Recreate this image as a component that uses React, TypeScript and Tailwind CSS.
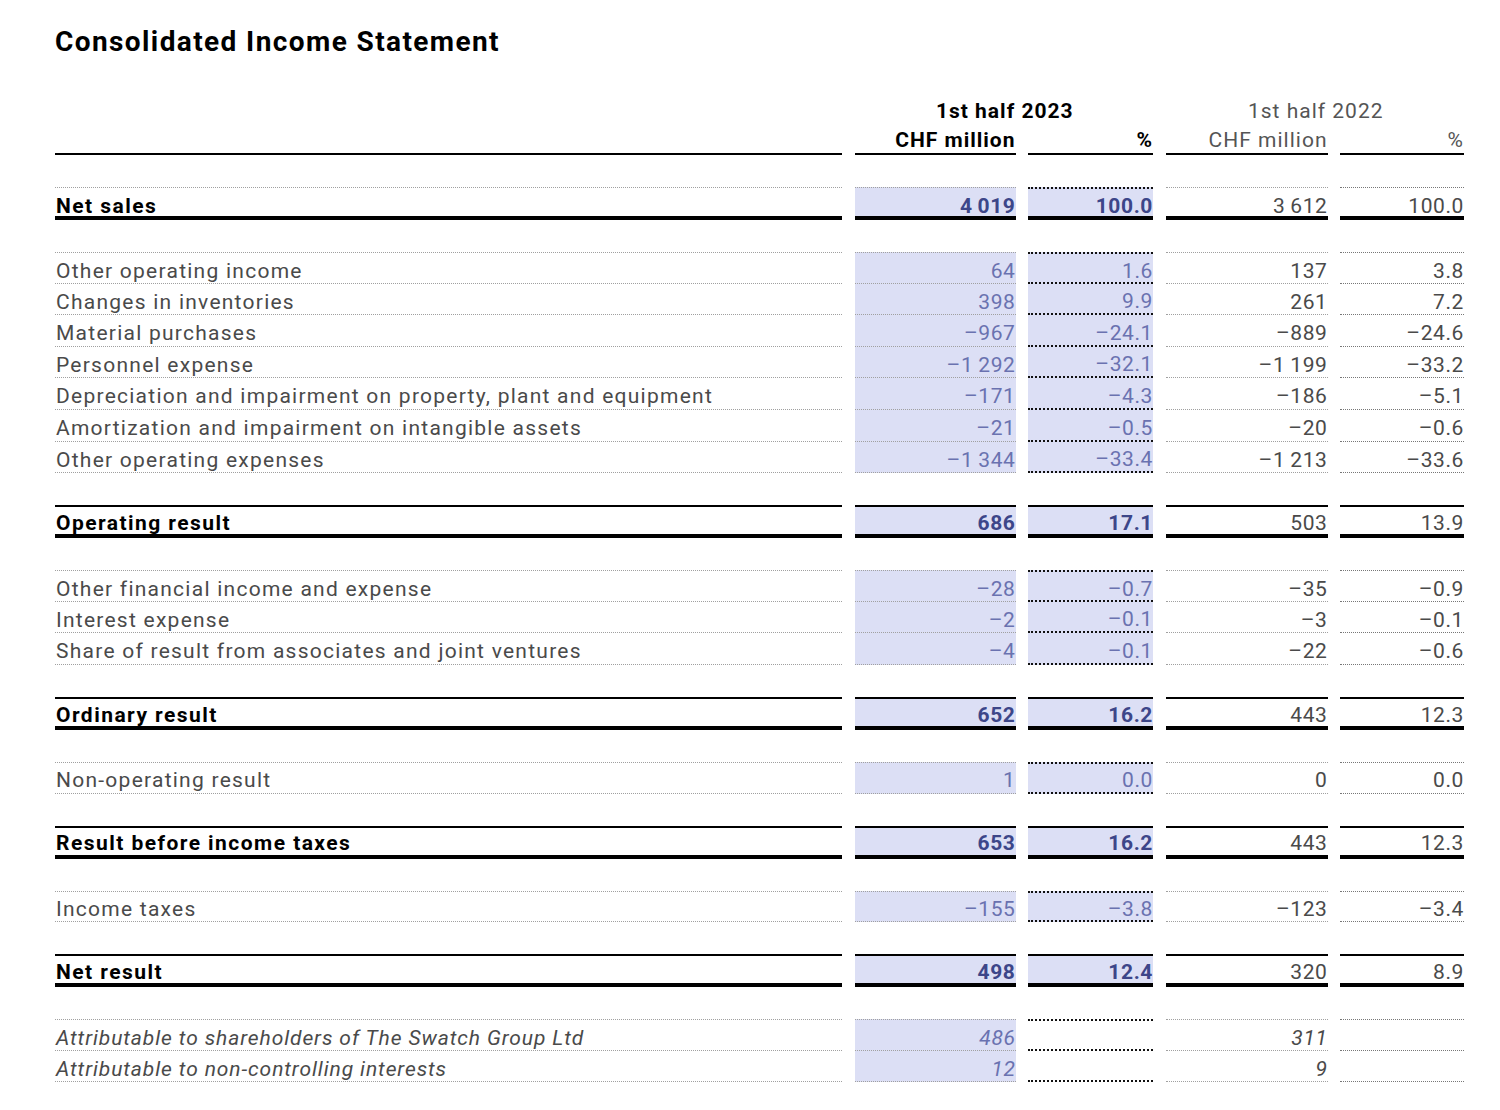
import React from 'react'

type Kind = 'bold' | 'detail' | 'italic'

type Linha = {
  label: string
  v23: string
  p23: string
  v22: string
  p22: string
}

type Bloco = { kind: Kind; linhas: Linha[]; primeiro?: boolean }

const L = (label: string, v23: string, p23: string, v22: string, p22: string): Linha => ({
  label,
  v23,
  p23,
  v22,
  p22,
})

const BLOCOS: Bloco[] = [
  { kind: 'bold', primeiro: true, linhas: [L('Net sales', '4\u2009019', '100.0', '3\u2009612', '100.0')] },
  {
    kind: 'detail',
    linhas: [
      L('Other operating income', '64', '1.6', '137', '3.8'),
      L('Changes in inventories', '398', '9.9', '261', '7.2'),
      L('Material purchases', '–967', '–24.1', '–889', '–24.6'),
      L('Personnel expense', '–1\u2009292', '–32.1', '–1\u2009199', '–33.2'),
      L('Depreciation and impairment on property, plant and equipment', '–171', '–4.3', '–186', '–5.1'),
      L('Amortization and impairment on intangible assets', '–21', '–0.5', '–20', '–0.6'),
      L('Other operating expenses', '–1\u2009344', '–33.4', '–1\u2009213', '–33.6'),
    ],
  },
  { kind: 'bold', linhas: [L('Operating result', '686', '17.1', '503', '13.9')] },
  {
    kind: 'detail',
    linhas: [
      L('Other financial income and expense', '–28', '–0.7', '–35', '–0.9'),
      L('Interest expense', '–2', '–0.1', '–3', '–0.1'),
      L('Share of result from associates and joint ventures', '–4', '–0.1', '–22', '–0.6'),
    ],
  },
  { kind: 'bold', linhas: [L('Ordinary result', '652', '16.2', '443', '12.3')] },
  { kind: 'detail', linhas: [L('Non-operating result', '1', '0.0', '0', '0.0')] },
  { kind: 'bold', linhas: [L('Result before income taxes', '653', '16.2', '443', '12.3')] },
  { kind: 'detail', linhas: [L('Income taxes', '–155', '–3.8', '–123', '–3.4')] },
  { kind: 'bold', linhas: [L('Net result', '498', '12.4', '320', '8.9')] },
  {
    kind: 'italic',
    linhas: [
      L('Attributable to shareholders of The Swatch Group Ltd', '486', '', '311', ''),
      L('Attributable to non-controlling interests', '12', '', '9', ''),
    ],
  },
]

const GRID = 'grid grid-cols-[787px_161px_125px_162px_124px] gap-x-[12.5px]'

// linhas pontilhadas de cada coluna (a do % de 2023 é mais forte)
const PONTO = [
  'border-[#a0a0a0]',
  'border-[#a0a0a0]',
  'border-[#111] border-dotted',
  'border-[#a0a0a0]',
  'border-[#777]',
]

function BlocoDetalhe({ b }: { b: Bloco }) {
  const italico = b.kind === 'italic'
  return (
    <div className={GRID}>
      {b.linhas.map((l, i) => {
        const topo = i === 0
        const vals = [l.label, l.v23, l.p23, l.v22, l.p22]
        return vals.map((v, c) => {
          const grossa = c === 2
          return (
            <div
              key={`${i}-${c}`}
              className={[
                'flex h-[31.6px] items-center border-b border-dotted pt-[7px]',
                topo ? 'border-t' : '',
                grossa ? 'border-b-2' : '',
                grossa && topo ? 'border-t-2' : '',
                PONTO[c],
                c === 0
                  ? `justify-start pl-[1px] text-[#4a4a4a] ${italico ? 'tracking-[0.9px]' : 'tracking-[1.25px]'}`
                  : 'justify-end tracking-[0.6px]',
                c === 1 || (c === 2 && !italico) ? 'bg-[#dcdff5] text-[#6a72b0]' : '',
                c >= 3 ? 'text-[#4a4a4a]' : '',
                italico ? 'italic' : '',
              ].join(' ')}
            >
              {v}
            </div>
          )
        })
      })}
    </div>
  )
}

function BlocoTotal({ b }: { b: Bloco }) {
  const l = b.linhas[0]
  const vals = [l.label, l.v23, l.p23, l.v22, l.p22]
  return (
    <div className={GRID}>
      {vals.map((v, c) => (
        <div
          key={c}
          className={[
            'flex h-[33px] items-center border-b-4 border-b-black',
            b.primeiro
              ? `border-t border-dotted pt-[9px] ${PONTO[c]} ${c === 2 ? 'border-t-2' : ''}`
              : 'border-t-2 border-t-black pt-[6px]',
            c === 0
              ? 'justify-start pl-[1px] font-bold tracking-[1.45px] text-black'
              : 'justify-end tracking-[0.6px]',
            c === 1 || c === 2 ? 'bg-[#dcdff5] font-bold text-[#3d4689]' : '',
            c >= 3 ? 'text-[#4a4a4a]' : '',
          ].join(' ')}
          style={b.primeiro ? { borderBottomStyle: 'solid', borderBottomColor: '#000' } : undefined}
        >
          {v}
        </div>
      ))}
    </div>
  )
}

export default function App() {
  return (
    <div
      className="min-h-[1110px] w-[1500px] bg-white pl-[55px] pt-[24px] text-[21px]"
      style={{ fontFamily: 'Roboto, "Liberation Sans", sans-serif' }}
    >
      <h1 className="text-[28px] font-bold leading-[36px] tracking-[1.4px] text-black">
        Consolidated Income Statement
      </h1>

      <div className={`${GRID} mt-[35px] tracking-[1px]`}>
        <div />
        <div className="col-span-2 h-[30px] pl-[2px] text-center font-bold leading-[32px] text-black">1st half 2023</div>
        <div className="col-span-2 h-[30px] pl-[2px] text-center leading-[32px] text-[#555]">1st half 2022</div>
        <div className="h-[30px] border-b-2 border-black" />
        <div className="h-[30px] border-b-2 border-black text-right font-bold leading-[30px] text-black">
          CHF million
        </div>
        <div className="h-[30px] border-b-2 border-black text-right font-bold leading-[30px] text-black">%</div>
        <div className="h-[30px] border-b-2 border-black text-right leading-[30px] text-[#555]">CHF million</div>
        <div className="h-[30px] border-b-2 border-black text-right leading-[30px] text-[#555]">%</div>
      </div>

      <div className="mt-[32px] flex flex-col gap-y-[32px]">
        {BLOCOS.map((b, i) =>
          b.kind === 'bold' ? <BlocoTotal key={i} b={b} /> : <BlocoDetalhe key={i} b={b} />,
        )}
      </div>
    </div>
  )
}
